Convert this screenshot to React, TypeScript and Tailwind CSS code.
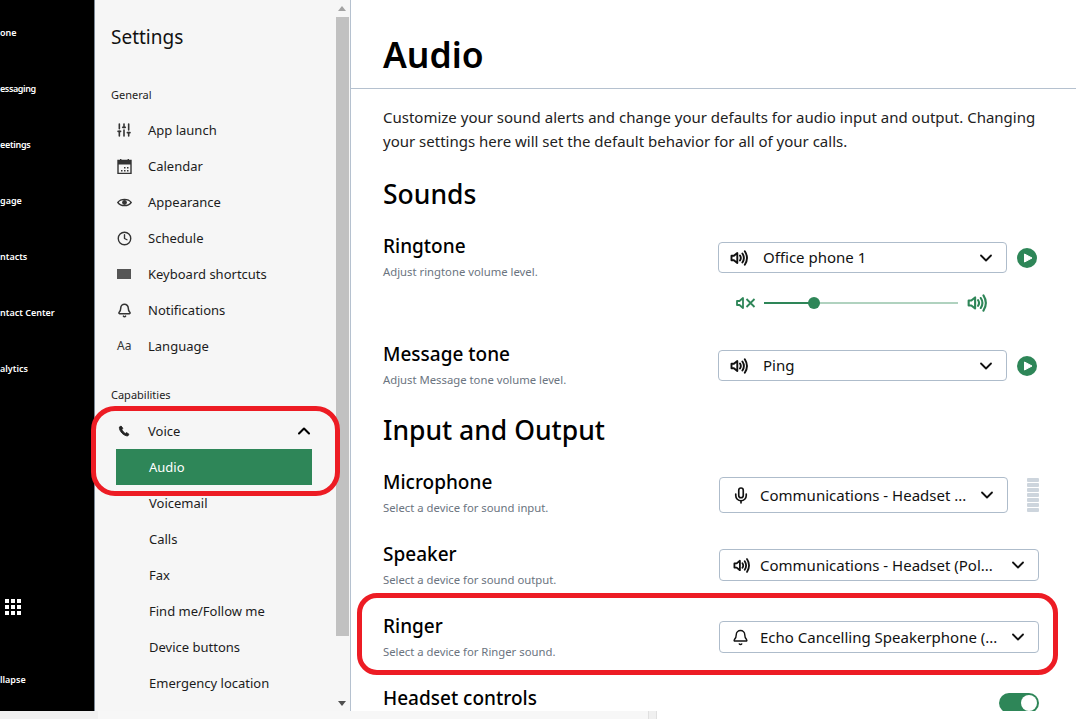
import React from "react";
import { ChevronDown, ChevronUp, Mic, Bell, Clock, SlidersVertical } from "lucide-react";

const Speaker = ({ className = "" }: { className?: string }) => (
  <svg viewBox="0 0 18 18" className={className} fill="none" stroke="currentColor" strokeWidth="1.9">
    <path d="M1.5 6.8h2.4l3.4-2.8v10l-3.4-2.8H1.5z" strokeLinejoin="round" />
    <path d="M10 6.5c1 1.5 1 3.5 0 5M12.4 4.5c1.8 2.7 1.8 6.3 0 9M14.8 2.2c2.7 4.2 2.7 9.4 0 13.6" strokeLinecap="round" />
  </svg>
);
const Mute = ({ className = "" }: { className?: string }) => (
  <svg viewBox="0 0 20 14" className={className} fill="none" stroke="currentColor" strokeWidth="1.8">
    <path d="M1 5h2.5L7 2v10L3.5 9H1z" strokeLinejoin="round" />
    <path d="M10.5 3l8 8M18.5 3l-8 8" />
  </svg>
);
const CalendarIcon = () => (
  <svg viewBox="0 0 15 15" className="w-[15px] h-[15px]">
    <path d="M3 0h1.4v2H3zM10.6 0H12v2h-1.4z" fill="#333" />
    <path d="M1 1.5h13v13H1z" fill="none" stroke="#333" strokeWidth="1.4" />
    <path d="M1 1.5h13v4H1z" fill="#333" />
    <path d="M7 8h1.5v1.5H7zM10 8h1.5v1.5H10zM4 11h1.5v1.5H4zM7 11h1.5v1.5H7zM10 11h1.5v1.5H10z" fill="#333" />
  </svg>
);
const EyeIcon = () => (
  <svg viewBox="0 0 15 15" className="w-[15px] h-[15px]">
    <path d="M.8 7.5C3.8 3.3 11.2 3.3 14.2 7.5 11.2 11.7 3.8 11.7.8 7.5z" fill="none" stroke="#333" strokeWidth="1.3" />
    <circle cx="7.5" cy="7.5" r="2.4" fill="#333" />
  </svg>
);
const PhoneIcon = () => (
  <svg viewBox="0 0 14 14" className="w-[12px] h-[12px]">
    <path d="M3.6 1.2L1.6 2.4c-.4 4.6 4.8 10.4 9.8 10.4l1.4-2-2.8-2-1.4 1C7 9 5.2 7 4.6 5.2l1-1.4z" fill="#222" stroke="#222" strokeWidth="1" strokeLinejoin="round" />
  </svg>
);

const navLabels = [
  ["one", 33, ""],
  ["essaging", 89, "tracking-[-0.4px]"],
  ["eetings", 145, "tracking-[-0.3px]"],
  ["gage", 201, ""],
  ["ntacts", 257, ""],
  ["ntact Center", 313, ""],
  ["alytics", 369, ""],
] as const;

function Row({ icon, label }: { icon?: React.ReactNode; label: string }) {
  return (
    <div className="h-9 flex items-center text-[13px] text-[#1c1c1c]">
      <div className="w-[53px] pl-[22px] flex items-center text-[#333]">{icon}</div>
      <span className="pt-[2px]">{label}</span>
    </div>
  );
}

function Select({ icon, text, w, wide }: { icon: React.ReactNode; text: string; w: string; wide?: boolean }) {
  return (
    <div className={`${w} flex items-center border border-[#aebccb] rounded-[4px] bg-white text-[#111] shrink-0`}>
      <div className={wide ? "w-[44px] pl-[11px] shrink-0 flex items-center" : "w-[40px] pl-[13px] shrink-0 flex items-center"}>{icon}</div>
      <span className="flex-1 text-[15px] whitespace-nowrap leading-none">{text}</span>
      <ChevronDown className="w-5 h-5 mr-[10px] shrink-0" strokeWidth={2.2} />
    </div>
  );
}

function PlayBtn() {
  return (
    <div className="w-5 h-5 rounded-full bg-[#2e8658] flex items-center justify-center">
      <svg viewBox="0 0 10 10" className="w-[10px] h-[10px] ml-px">
        <path d="M1.5 1v8L9 5z" fill="white" stroke="white" strokeWidth="1" strokeLinejoin="round" />
      </svg>
    </div>
  );
}

function Label({ title, sub }: { title: string; sub: string }) {
  return (
    <div className="-mt-px">
      <div className="text-[19px] leading-6 font-medium text-black">{title}</div>
      <div className="text-[11.3px] leading-4 mt-[6px] text-[#6b7480]">{sub}</div>
    </div>
  );
}

export default function App() {
  return (
    <div className="relative w-[1076px] h-[719px] overflow-hidden bg-white font-['Noto_Sans',sans-serif]">
      <div className="flex h-[711px]">
        {/* black rail */}
        <div className="relative w-[94px] shrink-0 bg-black text-white text-[9px] font-semibold overflow-hidden">
          {navLabels.map(([t, y, track]) => (
            <div key={t} className={`absolute left-0 leading-none whitespace-nowrap ${track}`} style={{ top: y - 5 }}>{t}</div>
          ))}
          <div className="absolute left-[5px] top-[599px] grid grid-cols-3 gap-[2px]">
            {Array.from({ length: 9 }).map((_, i) => (
              <div key={i} className="w-[4px] h-[4px] bg-white" />
            ))}
          </div>
          <div className="absolute left-0 top-[675px] leading-none">llapse</div>
        </div>
        <div className="w-px bg-[#7b8794] shrink-0" />

        {/* settings panel */}
        <div className="w-[239px] shrink-0 bg-[#f6f6f6] overflow-hidden">
          <div className="pl-4 pt-[23px] text-[19px] leading-7 text-[#111] font-normal">Settings</div>
          <div className="pl-4 mt-[36px] text-[11px] leading-4 text-[#1c1c1c]">General</div>
          <div className="mt-[9px]">
            <Row label="App launch" icon={<SlidersVertical className="w-4 h-4 -ml-px" strokeWidth={2.4} />} />
            <Row label="Calendar" icon={<CalendarIcon />} />
            <Row label="Appearance" icon={<EyeIcon />} />
            <Row label="Schedule" icon={<Clock className="w-[15px] h-[15px]" strokeWidth={2.2} />} />
            <Row label="Keyboard shortcuts" icon={<div className="w-[14px] h-[10px] bg-[#555]" />} />
            <Row label="Notifications" icon={<Bell className="w-[15px] h-[15px]" strokeWidth={2.4} />} />
            <Row label="Language" icon={<span className="text-[12px] text-[#333]">Aa</span>} />
          </div>
          <div className="pl-4 mt-[23px] text-[11px] leading-4 text-[#1c1c1c]">Capabilities</div>
          <div className="mt-[10px]">
            <div className="h-9 flex items-center text-[13px] text-[#1c1c1c]">
              <div className="w-[53px] pl-[23px] flex items-center">
                <PhoneIcon />
              </div>
              <span className="flex-1 pt-[2px]">Voice</span>
              <ChevronUp className="w-5 h-5 mr-[20px] text-black" strokeWidth={2.5} />
            </div>
            <div className="ml-[21px] w-[196px] h-9 bg-[#2e8658] text-white text-[13px] flex items-center pl-[33px] pt-[2px]">Audio</div>
            <div className="text-[13px] text-[#1c1c1c]">
              {["Voicemail", "Calls", "Fax", "Find me/Follow me", "Device buttons", "Emergency location"].map((t) => (
                <div key={t} className="h-9 flex items-center pl-[54px] pt-[2px]">{t}</div>
              ))}
            </div>
          </div>
        </div>

        {/* scrollbar */}
        <div className="w-[16px] shrink-0 bg-[#f6f6f6] flex flex-col items-center">
          <div className="h-[17px] flex items-center justify-center">
            <div className="w-0 h-0 border-x-[4px] border-x-transparent border-b-[5px] border-b-[#a3a3a3]" />
          </div>
          <div className="w-[13px] h-[619px] bg-[#c1c1c1]" />
          <div className="flex-1 flex items-end pb-[5px]">
            <div className="w-0 h-0 border-x-[4px] border-x-transparent border-t-[5px] border-t-[#505050]" />
          </div>
        </div>
        <div className="w-px bg-[#b5c1cf] shrink-0" />

        {/* main */}
        <div className="flex-1 min-w-0 overflow-hidden">
          <div className="h-[89px] border-b border-[#b5c1cf] pl-8 pt-[30px]">
            <h1 className="text-[35.5px] leading-[48px] font-semibold text-black">Audio</h1>
          </div>
          <div className="pl-8 pr-[37px]">
            <p className="mt-4 text-[15px] leading-6 text-[#222] w-[660px]">
              Customize your sound alerts and change your defaults for audio input and output. Changing your settings here will set the default behavior for all of your calls.
            </p>
            <h2 className="mt-[23px] text-[26.5px] leading-9 font-medium text-black">Sounds</h2>

            <div className="mt-[23px] flex justify-between h-[108px]">
              <Label title="Ringtone" sub="Adjust ringtone volume level." />
              <div className="w-[321px] pt-[7px]">
                <div className="flex items-center">
                  <Select wide w="w-[289px] h-[31px]" text="Office phone 1" icon={<Speaker className="w-[18px] h-[18px]" />} />
                  <div className="ml-[10px]"><PlayBtn /></div>
                </div>
                <div className="mt-[20px] ml-[18px] flex items-center text-[#2e8658]">
                  <Mute className="w-[20px] h-[14px] shrink-0" />
                  <div className="relative ml-[8px] w-[194px] h-[2px] bg-[#b0d2bf]">
                    <div className="w-[50px] h-[2px] bg-[#2e8658]" />
                    <div className="absolute left-[44px] -top-[5px] w-3 h-3 rounded-full bg-[#2e8658]" />
                  </div>
                  <Speaker className="ml-[9px] w-[20px] h-[20px]" />
                </div>
              </div>
            </div>

            <div className="flex justify-between h-[53px]">
              <Label title="Message tone" sub="Adjust Message tone volume level." />
              <div className="w-[321px] pt-[7px]">
                <div className="flex items-center">
                  <Select wide w="w-[289px] h-[31px]" text="Ping" icon={<Speaker className="w-[18px] h-[18px]" />} />
                  <div className="ml-[10px]"><PlayBtn /></div>
                </div>
              </div>
            </div>

            <h2 className="mt-[16px] text-[26.5px] leading-9 font-medium text-black">Input and Output</h2>

            <div className="mt-[23px] flex justify-between h-[72px]">
              <Label title="Microphone" sub="Select a device for sound input." />
              <div className="w-[320px] flex items-start pt-[6px]">
                <Select w="w-[289px] h-9" text="Communications - Headset ..." icon={<Mic className="w-[18px] h-[19px] -ml-px" strokeWidth={2.2} />} />
                <div className="ml-[19px] mt-[1px] w-3 flex flex-col gap-[1px]">
                  {Array.from({ length: 7 }).map((_, i) => (
                    <div key={i} className="h-[4px] bg-[#cdd5dd] rounded-[1px]" />
                  ))}
                </div>
              </div>
            </div>

            <div className="flex justify-between h-[72px]">
              <Label title="Speaker" sub="Select a device for sound output." />
              <div className="w-[320px] pt-[6px]">
                <Select w="w-[320px] h-8" text="Communications - Headset (Pol..." icon={<Speaker className="w-[17px] h-[17px]" />} />
              </div>
            </div>

            <div className="flex justify-between h-[72px]">
              <Label title="Ringer" sub="Select a device for Ringer sound." />
              <div className="w-[320px] pt-[6px]">
                <Select w="w-[320px] h-8" text="Echo Cancelling Speakerphone (..." icon={<Bell className="w-[17px] h-[17px] -ml-px" strokeWidth={2} />} />
              </div>
            </div>

            <div className="flex justify-between">
              <div className="text-[19px] leading-6 font-medium text-black -mt-[1px]">Headset controls</div>
              <div className="relative mt-[6px] w-10 h-5 rounded-full bg-[#2e8658]">
                <div className="absolute right-[2px] top-[2px] w-4 h-4 rounded-full bg-white" />
              </div>
            </div>
          </div>
        </div>
      </div>

      {/* bottom strip */}
      <div className="absolute left-0 right-0 top-[711px] h-2 bg-white flex">
        <div className="w-[98px] bg-[#f1f1f1]" />
        <div className="w-[550px] bg-[#f7f7f7]" />
        <div className="w-[9px] bg-[#f0f0f0] border-x border-[#e0e0e0]" />
      </div>

      {/* red annotations */}
      <div className="absolute left-[91px] top-[406px] w-[249px] h-[90px] border-[5px] border-[#ed1c24] rounded-[24px] pointer-events-none" />
      <div className="absolute left-[357px] top-[593px] w-[701px] h-[82px] border-[5px] border-[#ed1c24] rounded-[20px] pointer-events-none" />
    </div>
  );
}
